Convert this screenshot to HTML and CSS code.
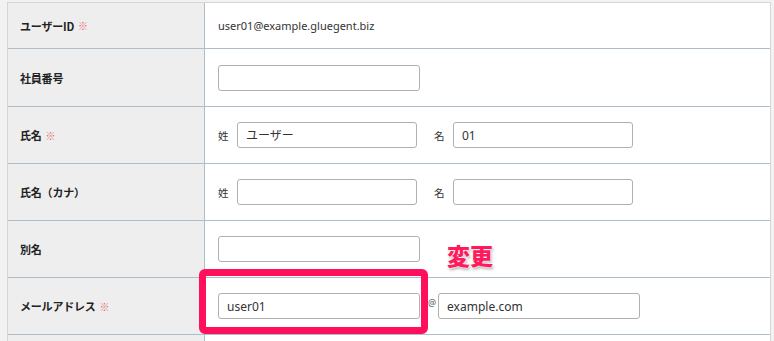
FILE: index.html
```html
<!DOCTYPE html>
<html lang="ja">
<head>
<meta charset="utf-8">
<title>ユーザー編集</title>
<link rel="stylesheet" href="styles.css">
</head>
<body>
<div class="panel">
  <div class="row row-first">
    <div class="label">ユーザーID<span class="req">※</span></div>
    <div class="value"><span class="text">user01@example.gluegent.biz</span></div>
  </div>
  <div class="row row-tall">
    <div class="label">社員番号</div>
    <div class="value"><input class="field wide" type="text" value=""></div>
  </div>
  <div class="row">
    <div class="label">氏名<span class="req">※</span></div>
    <div class="value">
      <span class="sub">姓</span><input class="field half" type="text" value="ユーザー">
      <span class="sub sub-gap">名</span><input class="field half" type="text" value="01">
    </div>
  </div>
  <div class="row">
    <div class="label">氏名（カナ）</div>
    <div class="value">
      <span class="sub">姓</span><input class="field half" type="text" value="">
      <span class="sub sub-gap">名</span><input class="field half" type="text" value="">
    </div>
  </div>
  <div class="row">
    <div class="label">別名</div>
    <div class="value"><input class="field wide" type="text" value=""></div>
  </div>
  <div class="row row-mail">
    <div class="label">メールアドレス<span class="req">※</span></div>
    <div class="value">
      <input class="field wide" type="text" value="user01">
      <span class="at">@</span>
      <input class="field wide" type="text" value="example.com">
      <div class="highlight"></div>
      <div class="note">変更</div>
    </div>
  </div>
  <div class="row">
    <div class="label"></div>
    <div class="value"></div>
  </div>
</div>
</body>
</html>
```

FILE: styles.css
```css
html, body {
  margin: 0;
  padding: 0;
  background: #f2f2f2;
  overflow: hidden;
}

body {
  font-family: "Noto Sans CJK JP", "Noto Sans", sans-serif;
  color: #222;
}

.panel {
  margin: 2px 0 0 7px;
  width: 764px;
  box-sizing: border-box;
  border: 1px solid #d6d6d6;
  border-bottom: none;
  background: #fff;
}

.row {
  display: grid;
  grid-template-columns: 197px 1fr;
  height: 56px;
  border-bottom: 1px solid #aebdc8;
}

.row-first {
  height: 45px;
}

.row-tall {
  height: 57px;
}

.label {
  background: #eeeeee;
  border-right: 1px solid #aebdc8;
  display: flex;
  align-items: center;
  padding-left: 12px;
  font-size: 11px;
  font-weight: 700;
  color: #222;
  letter-spacing: -0.2px;
}

.req {
  color: #e86a6a;
  font-weight: 400;
  margin-left: 4px;
  font-size: 10px;
}

.value {
  position: relative;
  display: flex;
  align-items: center;
  padding-left: 13px;
}

.text {
  font-family: "Noto Sans", sans-serif;
  font-size: 11px;
  color: #333;
}

.field {
  box-sizing: border-box;
  height: 26px;
  border: 1px solid #b0b0b0;
  border-radius: 3px;
  padding: 0 8px;
  font-family: "Noto Sans", "Noto Sans CJK JP", sans-serif;
  font-size: 12px;
  color: #333;
  background: #fff;
  margin: 0;
  outline: none;
}

.wide {
  width: 202px;
}

.half {
  width: 180px;
}

.sub {
  font-size: 10.5px;
  color: #333;
  width: 19px;
}

.sub-gap {
  margin-left: 17px;
}

.at {
  font-family: "Noto Sans", sans-serif;
  font-size: 9px;
  color: #555;
  margin: 0 2px 0 8px;
  position: relative;
  top: -4px;
}

.highlight {
  position: absolute;
  left: -6px;
  top: -9px;
  width: 229px;
  height: 65px;
  box-sizing: border-box;
  border: 7px solid #ff105c;
  border-radius: 6px;
}

.note {
  position: absolute;
  left: 242px;
  top: -34px;
  font-size: 23px;
  font-weight: 900;
  color: #ff1a5e;
  text-shadow: 0 0 2px #fff, 0 0 2px #fff, 1px 2px 3px rgba(0, 0, 0, 0.35);
  line-height: 1;
}
```
